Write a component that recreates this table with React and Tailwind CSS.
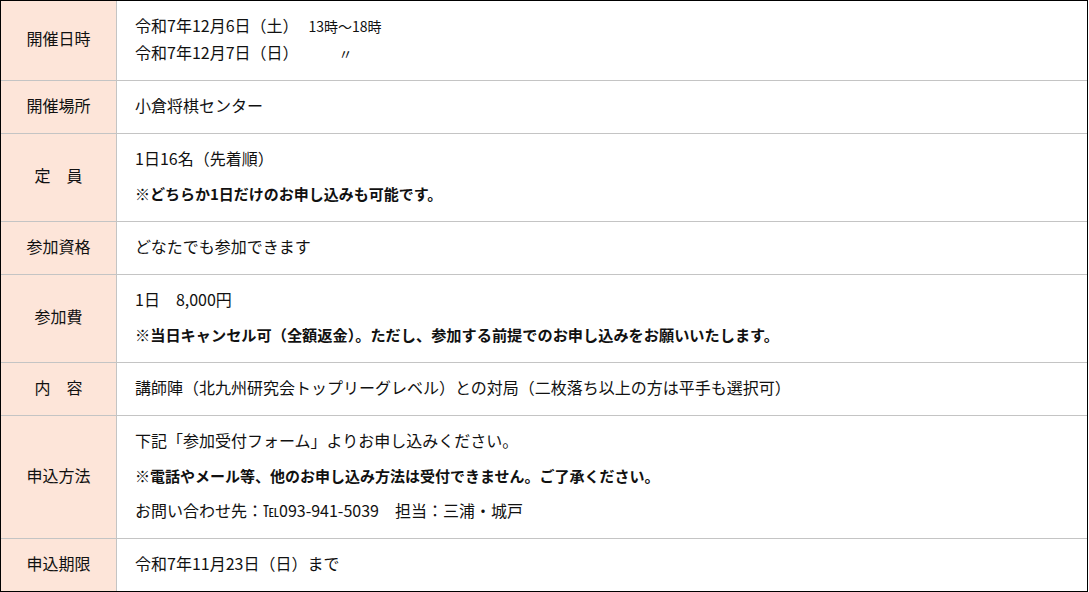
const rows = [
  {
    label: "開催日時",
    body: (
      <p>
        令和7年12月6日（土）<span className="ml-[10px] text-[14px] leading-none">13時～18時</span>
        <br />
        令和7年12月7日（日）<span className="ml-[40px] text-[14px] leading-none">〃</span>
      </p>
    ),
  },
  { label: "開催場所", body: <p>小倉将棋センター</p> },
  {
    label: "定　員",
    body: (
      <>
        <p>1日16名（先着順）</p>
        <p className="text-[15px] font-bold">※どちらか1日だけのお申し込みも可能です。</p>
      </>
    ),
  },
  { label: "参加資格", body: <p>どなたでも参加できます</p> },
  {
    label: "参加費",
    body: (
      <>
        <p>1日　8,000円</p>
        <p className="text-[15.2px] font-bold">
          ※当日キャンセル可（全額返金）。ただし、参加する前提でのお申し込みをお願いいたします。
        </p>
      </>
    ),
  },
  {
    label: "内　容",
    body: (
      <p>講師陣（北九州研究会トップリーグレベル）との対局（二枚落ち以上の方は平手も選択可）</p>
    ),
  },
  {
    label: "申込方法",
    body: (
      <>
        <p>下記「参加受付フォーム」よりお申し込みください。</p>
        <p className="text-[15px] font-bold">
          ※電話やメール等、他のお申し込み方法は受付できません。ご了承ください。
        </p>
        <p>お問い合わせ先：℡093-941-5039　担当：三浦・城戸</p>
      </>
    ),
  },
  { label: "申込期限", body: <p>令和7年11月23日（日）まで</p> },
];

export default function App() {
  return (
    <div className="bg-white">
      <div
        className="w-[1088px] border border-black text-[16px] leading-[27px] text-[#111]"
        style={{ fontFamily: '"Noto Sans CJK JP", "Noto Sans", sans-serif' }}
      >
        {rows.map((row, i) => (
          <div
            key={row.label}
            className={`grid grid-cols-[116px_1fr] ${i > 0 ? "border-t border-[#c4c4c4]" : ""}`}
          >
            <div className="flex items-center justify-center border-r border-[#c4c4c4] bg-[#fde5d9] pb-[4px]">
              {row.label}
            </div>
            <div className="flex flex-col gap-[8px] pl-[18px] pr-4 pt-[11px] pb-[14px]">
              {row.body}
            </div>
          </div>
        ))}
      </div>
    </div>
  );
}
